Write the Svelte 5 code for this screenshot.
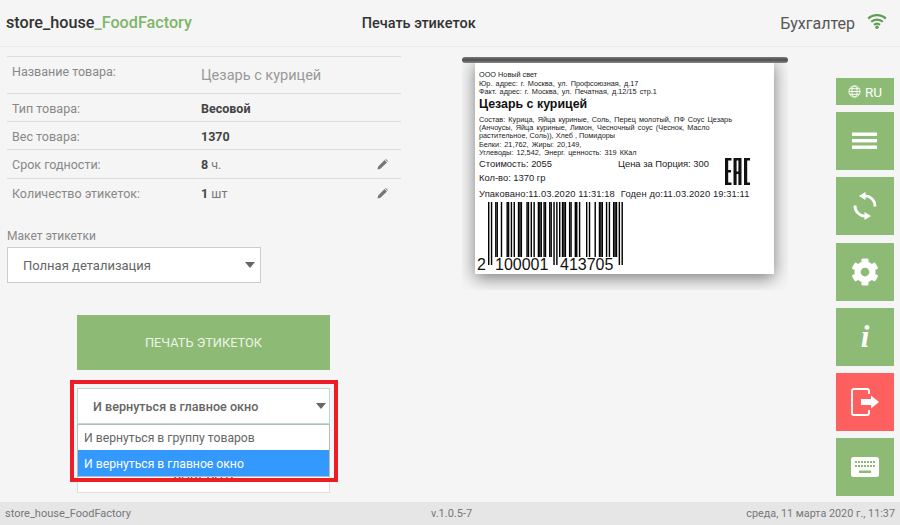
<script>
	const digits = '2100001413705';
	const L = ['0001101', '0011001', '0010011', '0111101', '0100011', '0110001', '0101111', '0111011', '0110111', '0001011'];
	const parity = 'LLGLGG';

	function invert(code) {
		return code.split('').map((c) => (c === '0' ? '1' : '0')).join('');
	}

	function buildBars() {
		let bits = '101';
		for (let i = 0; i < 6; i++) {
			const code = L[+digits[i + 1]];
			bits += parity[i] === 'L' ? code : invert(code).split('').reverse().join('');
		}
		bits += '01010';
		for (let i = 0; i < 6; i++) bits += invert(L[+digits[i + 7]]);
		bits += '101';

		const bars = [];
		for (let i = 0; i < bits.length; i++) {
			if (bits[i] !== '1') continue;
			const guard = i < 3 || (i >= 45 && i < 50) || i >= 92;
			bars.push({ x: 12 + i * 1.42, h: guard ? 63 : 55 });
		}
		return bars;
	}

	const bars = buildBars();

	const rows = [
		{ label: 'Тип товара:', value: 'Весовой' },
		{ label: 'Вес товара:', value: '1370' },
		{ label: 'Срок годности:', value: '8', unit: 'ч.', edit: true },
		{ label: 'Количество этикеток:', value: '1', unit: 'шт', edit: true }
	];
</script>

<div class="page">
	<header>
		<div class="brand">store_house<span>_FoodFactory</span></div>
		<div class="title">Печать этикеток</div>
		<div class="user">
			Бухгалтер
			<svg class="wifi" viewBox="0 0 20 16" width="20" height="16">
				<path d="M1.2 5.6C6 1 14 1 18.8 5.6M4.2 8.8C7.4 5.8 12.6 5.8 15.8 8.8M7 11.8C8.7 10.4 11.3 10.4 13 11.8" fill="none" stroke="#5d9e50" stroke-width="2.2" />
				<circle cx="10" cy="14.2" r="1.7" fill="#5d9e50" />
			</svg>
		</div>
	</header>

	<main>
		<section class="left">
			<div class="info">
				<div class="row first">
					<div class="label">Название товара:</div>
					<div class="name">Цезарь с курицей</div>
				</div>
				{#each rows as row}
					<div class="row">
						<div class="label">{row.label}</div>
						<div class="value"><b>{row.value}</b> {row.unit ?? ''}</div>
						{#if row.edit}
							<svg class="pencil" viewBox="0 0 12 12" width="11" height="11">
								<path d="M0.5 11.5 1.3 8.2 8.3 1.2 10.8 3.7 3.8 10.7ZM9 0.5 9.8 0 12 2.2 11.5 3Z" fill="#777" />
							</svg>
						{/if}
					</div>
				{/each}
			</div>

			<div class="layout-label">Макет этикетки</div>
			<div class="select layout-select">
				<span>Полная детализация</span>
				<i class="caret"></i>
			</div>

			<div class="actions">
				<button class="print">ПЕЧАТЬ ЭТИКЕТОК</button>
				<div class="after-print">
					<div class="select after-select">
						<span>И вернуться в главное окно</span>
						<i class="caret"></i>
					</div>
					<ul class="options">
						<li>И вернуться в группу товаров</li>
						<li class="active">И вернуться в главное окно</li>
					</ul>
					<div class="highlight"></div>
				</div>
				<button class="close">ЗАКРЫТЬ</button>
			</div>
		</section>

		<section class="preview">
			<div class="roller"></div>
			<div class="shadow-box">
				<div class="paper">
					<div class="small">ООО Новый свет</div>
					<div class="small wide legal">Юр. адрес: г. Москва, ул. Профсоюзная, д.17</div>
					<div class="small wide">Факт. адрес: г. Москва, ул. Печатная, д.12/15 стр.1</div>
					<div class="product">Цезарь с курицей</div>
					<div class="small wide">Состав: Курица, Яйца куриные, Соль, Перец молотый, ПФ Соус Цезарь</div>
					<div class="small wide">(Анчоусы, Яйца куриные, Лимон, Чесночный соус (Чеснок, Масло</div>
					<div class="small">растительное, Соль)), Хлеб , Помидоры</div>
					<div class="small wide">Белки: 21,762, Жиры: 20,149,</div>
					<div class="small wide">Углеводы: 12,542, Энерг. ценность: 319 ККал</div>
					<div class="price-row">
						<div class="lines">
							<div class="med cost"><span>Стоимость: 2055</span><span>Цена за Порция: 300</span></div>
							<div class="med qty">Кол-во: 1370 гр</div>
						</div>
						<svg class="eac" viewBox="0 0 25 27" width="25" height="27">
							<path d="M0 0H6.5V2.6H3.2V12H6V14.600H3.2V24.400H6.500V27H0ZM8.500 0H16.500V27H13.400V16H11.600V27H8.500ZM11.600 2.600V13.400H13.400V2.600ZM19 0H25V2.600H22.200V24.400H25V27H19Z" fill="#111" fill-rule="evenodd" />
						</svg>
					</div>
					<div class="med dates"><span>Упаковано:11.03.2020 11:31:18</span><span>Годен до:11.03.2020 19:31:11</span></div>
					<svg class="barcode" viewBox="0 0 160 72" width="160" height="72">
						{#each bars as bar}
							<rect x={bar.x} y="0" width="1.42" height={bar.h} fill="#000" />
						{/each}
						<text x="1" y="68">2</text>
						<text x="19" y="68">100001</text>
						<text x="84" y="68">413705</text>
					</svg>
				</div>
			</div>
		</section>

		<aside>
			<button class="side lang">
				<svg viewBox="0 0 14 14" width="13" height="13" fill="none" stroke="#fff" stroke-width="1">
					<circle cx="7" cy="7" r="6" />
					<ellipse cx="7" cy="7" rx="2.8" ry="6" />
					<path d="M1 7H13M1.8 4H12.2M1.8 10H12.2" />
				</svg>
				RU
			</button>
			<button class="side" aria-label="Меню">
				<svg viewBox="0 0 26 18" width="26" height="18" fill="#fff">
					<rect y="0.5" width="25" height="3.4" />
					<rect y="7" width="25" height="3.4" />
					<rect y="13.5" width="25" height="3.4" />
				</svg>
			</button>
			<button class="side" aria-label="Обновить">
				<svg viewBox="0 0 30 30" width="30" height="30">
					<path d="M14 5A10 10 0 0 1 25 15.500M16 25A10 10 0 0 1 5 14.500" fill="none" stroke="#fff" stroke-width="2.800" />
					<path d="M9 5 15.500 1V9ZM21 25 14.500 21V29Z" fill="#fff" />
				</svg>
			</button>
			<button class="side" aria-label="Настройки">
				<svg viewBox="0 0 512 512" width="28" height="28">
					<path fill="#fff" d="M487.4 315.7l-42.6-24.6c4.3-23.2 4.3-47 0-70.2l42.6-24.6c4.9-2.8 7.1-8.6 5.5-14-11.1-35.6-30-67.8-54.7-94.6-3.8-4.1-10-5.1-14.8-2.3L380.8 110c-17.9-15.4-38.5-27.3-60.8-35.1V25.8c0-5.6-3.9-10.5-9.4-11.7-36.7-8.2-74.3-7.8-109.2 0-5.5 1.2-9.4 6.1-9.4 11.7V75c-22.2 7.9-42.8 19.8-60.8 35.1L88.7 85.5c-4.9-2.8-11-1.9-14.8 2.3-24.7 26.7-43.6 58.9-54.7 94.6-1.7 5.4.6 11.2 5.5 14L67.3 221c-4.3 23.2-4.3 47 0 70.2l-42.6 24.6c-4.9 2.8-7.1 8.6-5.5 14 11.1 35.6 30 67.8 54.7 94.6 3.8 4.1 10 5.1 14.8 2.3l42.6-24.6c17.9 15.4 38.5 27.3 60.8 35.1v49.2c0 5.6 3.9 10.5 9.4 11.7 36.7 8.2 74.3 7.8 109.2 0 5.5-1.2 9.4-6.1 9.4-11.7v-49.2c22.2-7.9 42.8-19.8 60.8-35.1l42.6 24.6c4.9 2.8 11 1.9 14.8-2.3 24.7-26.7 43.6-58.9 54.7-94.6 1.5-5.5-.7-11.3-5.6-14.1zM256 336c-44.1 0-80-35.9-80-80s35.9-80 80-80 80 35.9 80 80-35.9 80-80 80z" />
				</svg>
			</button>
			<button class="side info-btn">i</button>
			<button class="side exit" aria-label="Выход">
				<svg viewBox="0 0 30 30" width="30" height="30">
					<path d="M19 7V4C19 2.800 18.200 2 17 2H4C2.800 2 2 2.800 2 4V26C2 27.200 2.800 28 4 28H17C18.200 28 19 27.200 19 26V23" fill="none" stroke="#fff" stroke-width="1.800" />
					<path d="M11 12H21V8.500L29 15 21 21.500V18H11Z" fill="#fff" />
				</svg>
			</button>
			<button class="side" aria-label="Клавиатура">
				<svg viewBox="0 0 28 20" width="28" height="20">
					<rect y="0" width="28" height="20" rx="2.5" fill="#fff" />
					<path d="M4 4H6V6H4ZM7 4H9V6H7ZM10 4H12V6H10ZM13 4H15V6H13ZM16 4H18V6H16ZM19 4H21V6H19ZM22 4H24V6H22ZM4 8H6V10H4ZM7 8H9V10H7ZM10 8H12V10H10ZM13 8H15V10H13ZM16 8H18V10H16ZM19 8H21V10H19ZM22 8H24V10H22ZM8 13.500H20V16H8Z" fill="#8dbb76" />
				</svg>
			</button>
		</aside>
	</main>

	<footer>
		<span>store_house_FoodFactory</span>
		<span class="version">v.1.0.5-7</span>
		<span class="date">среда, 11 марта 2020 г., 11:37</span>
	</footer>
</div>

<style>
	:global(body) {
		margin: 0;
		background: #f5f5f5;
	}

	.page {
		display: flex;
		flex-direction: column;
		height: 525px;
		overflow: hidden;
		font-family: Roboto, sans-serif;
		color: #555;
	}

	header {
		flex: none;
		display: grid;
		grid-template-columns: 1fr 1fr 1fr;
		align-items: center;
		box-sizing: border-box;
		height: 47px;
		padding: 0 13px 0 6px;
		border-bottom: 1px solid #ececec;
	}

	.brand {
		font-size: 16.2px;
		font-weight: 500;
		color: #333;
		margin-bottom: 2px;
	}

	.brand span {
		color: #7fb56b;
	}

	.title {
		font-size: 14.5px;
		font-weight: 500;
		color: #333;
		margin-left: 62px;
	}

	.user {
		display: flex;
		align-items: center;
		justify-content: flex-end;
		gap: 12px;
		font-size: 16px;
		color: #555;
	}

	.wifi {
		margin-top: -4px;
	}

	main {
		flex: 1;
		display: flex;
		min-height: 0;
	}

	.left {
		flex: none;
		width: 394px;
		margin-left: 7px;
		padding-top: 9px;
	}

	.row {
		display: flex;
		align-items: center;
		box-sizing: border-box;
		height: 28px;
		padding: 1px 0 0 5px;
		border-top: 1px solid #ddd;
		font-size: 12.5px;
	}

	.row:nth-child(4) {
		height: 29px;
	}

	.row.first {
		height: 37px;
		padding-top: 0;
		align-items: flex-start;
	}

	.row.first .label {
		margin-top: 7px;
	}

	.label {
		width: 189px;
		color: #888;
	}

	.name {
		margin-top: 10px;
		font-size: 14.5px;
		color: #999;
	}

	.value {
		color: #777;
		flex: 1;
	}

	.value b {
		font-weight: 700;
		color: #444;
	}

	.pencil {
		margin-right: 13px;
	}

	.layout-label {
		margin-top: 23px;
		font-size: 12px;
		color: #888;
	}

	.select {
		display: flex;
		align-items: center;
		justify-content: space-between;
		box-sizing: border-box;
		height: 36px;
		background: #fff;
		border: 1px solid #ccc;
		font-size: 13px;
		color: #666;
	}

	.layout-select {
		width: 254px;
		margin-top: 4px;
		padding: 0 5px 0 15px;
	}

	.caret {
		width: 0;
		height: 0;
		border-left: 5.5px solid transparent;
		border-right: 5.5px solid transparent;
		border-top: 6px solid #666;
	}

	.actions {
		width: 253px;
		margin: 32px 0 0 70px;
	}

	button {
		display: block;
		padding: 0;
		border: 0;
		font-family: inherit;
	}

	.print {
		width: 100%;
		height: 55px;
		background: #8dbb76;
		font-size: 12.8px;
		color: #edf5e6;
	}

	.after-print {
		position: relative;
		margin-top: 18px;
	}

	.after-select {
		padding: 0 3px 0 15px;
		border-color: #b7dcd6;
		font-size: 12.6px;
		font-weight: 500;
	}

	.options {
		position: absolute;
		top: 36px;
		left: 0;
		right: 0;
		z-index: 2;
		margin: 0;
		padding: 0;
		list-style: none;
		background: #fff;
		border: 1px solid #bbb;
		font-size: 12.2px;
		color: #666;
	}

	.options li {
		height: 25px;
		padding-left: 6px;
		line-height: 27px;
	}

	.options li.active {
		height: 26px;
		line-height: 28px;
		background: #3399ff;
		color: #fff;
	}

	.highlight {
		position: absolute;
		top: -8px;
		left: -7px;
		right: -8px;
		z-index: 3;
		height: 94px;
		border: 4px solid #ee1c25;
	}

	.close {
		box-sizing: border-box;
		width: 100%;
		height: 63px;
		margin-top: 6px;
		padding-top: 26px;
		background: #fff;
		border: 1px solid #ddd;
		font-size: 13px;
		color: #555;
	}

	.preview {
		flex: none;
		width: 326px;
		margin: 9px 0 0 61px;
	}

	.roller {
		position: relative;
		z-index: 1;
		height: 6px;
		margin: 1px 0 0;
		border-radius: 3px;
		background: linear-gradient(#7a7a7a, #4d4d4d 50%, #8a8a8a);
	}

	.shadow-box {
		height: 230px;
		margin-top: -3px;
		padding: 0 13px;
		overflow: hidden;
	}

	.paper {
		box-sizing: border-box;
		width: 299px;
		height: 214px;
		padding: 11px 0 0 4px;
		background: #fff;
		box-shadow: 0 4px 16px rgba(0, 0, 0, 0.5);
		font-family: 'Liberation Sans', sans-serif;
		color: #222;
	}

	.small {
		font-size: 7.3px;
		line-height: 8.1px;
		white-space: nowrap;
	}

	.legal {
		margin-top: 1px;
	}

	.wide {
		word-spacing: 1.1px;
	}

	.product {
		margin: 1px 0 5px;
		font-size: 12.4px;
		line-height: 14px;
		font-weight: 700;
		color: #111;
	}

	.price-row {
		display: flex;
		margin-top: 1px;
	}

	.lines {
		flex: none;
		width: 246px;
	}

	.med {
		font-size: 9.4px;
		line-height: 12px;
		white-space: nowrap;
	}

	.cost {
		display: flex;
		gap: 66px;
	}

	.qty {
		margin-top: 2px;
	}

	.dates {
		display: flex;
		gap: 6px;
		margin-top: 3px;
		letter-spacing: 0.1px;
	}

	.barcode {
		display: block;
		margin: 2px 0 0 -3px;
	}

	.barcode text {
		font-family: 'Liberation Sans', sans-serif;
		font-size: 16px;
		fill: #111;
	}

	aside {
		flex: none;
		display: flex;
		flex-direction: column;
		gap: 7.2px;
		width: 58px;
		margin-left: 48px;
		padding-top: 31px;
	}

	.side {
		display: flex;
		align-items: center;
		justify-content: center;
		width: 58px;
		height: 58px;
		background: #8dbb76;
		color: #fff;
	}

	.lang {
		gap: 4px;
		height: 27px;
		font-size: 13.5px;
	}

	.info-btn {
		font-family: 'Liberation Serif', serif;
		font-style: italic;
		font-weight: 700;
		font-size: 31px;
	}

	.exit {
		background: #fe6060;
	}

	footer {
		flex: none;
		display: flex;
		align-items: center;
		justify-content: space-between;
		height: 23px;
		padding: 0 5px;
		background: #e6e6e6;
		font-size: 11px;
		color: #777;
	}

	.version {
		margin: 0 auto 0 300px;
	}

	.date {
		font-size: 10.8px;
	}
</style>
